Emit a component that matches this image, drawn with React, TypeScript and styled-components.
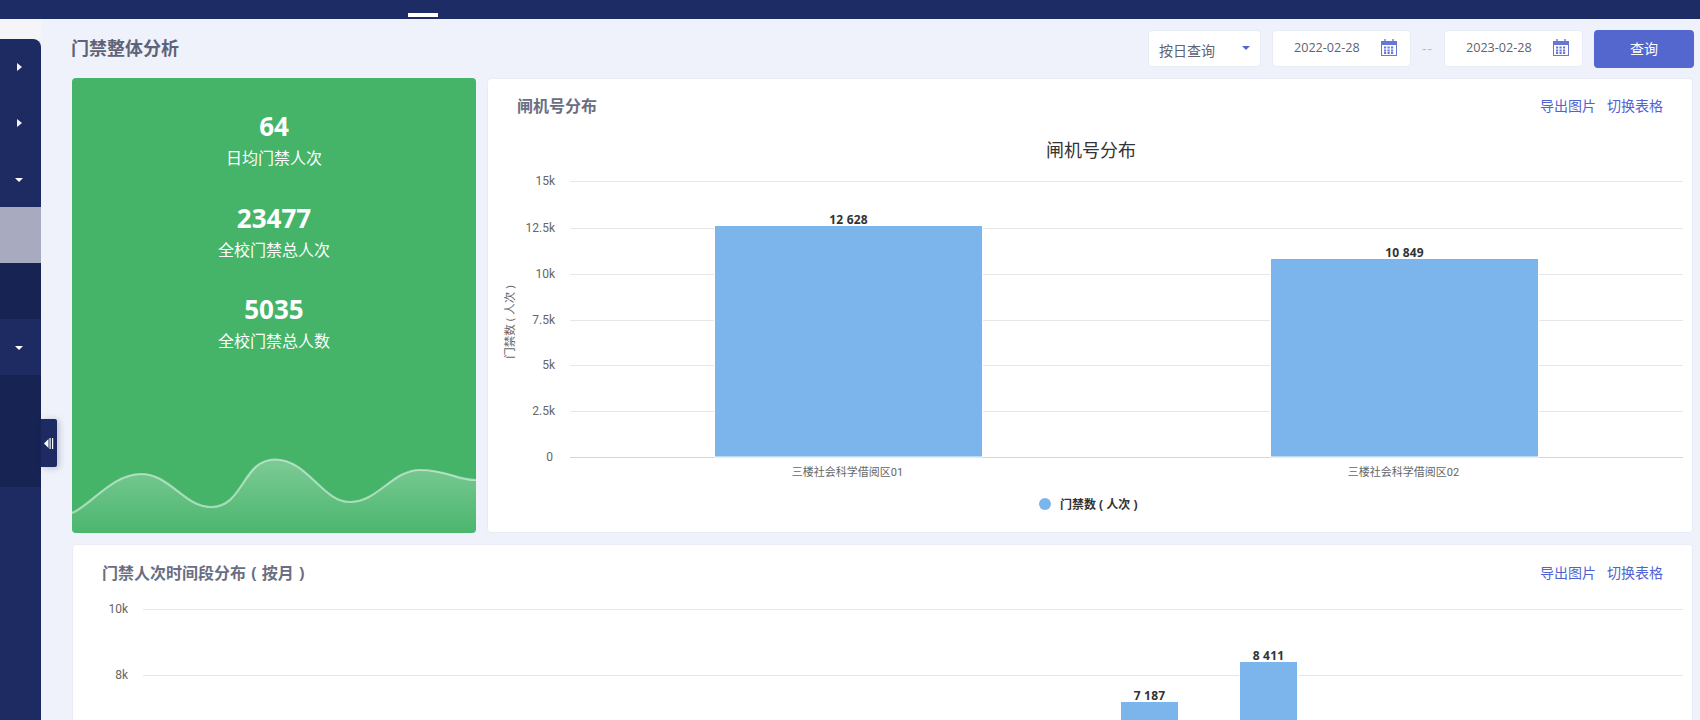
import React from "react";
import styled, { createGlobalStyle } from "styled-components";

const Global = createGlobalStyle`
  html, body { margin: 0; padding: 0; height: 720px; overflow: hidden; background: #eff2fa; }
  body { font-family: "Open Sans", "Noto Sans CJK SC", sans-serif; }
  * { box-sizing: border-box; }
`;

const Page = styled.div`
  width: 1700px;
  height: 720px;
  overflow: hidden;
  display: flex;
  flex-direction: column;
`;
const TopBar = styled.header`
  flex: 0 0 19px;
  background: #1e2c66;
  display: flex;
  align-items: flex-end;
  padding: 0 0 2px 408px;
`;
const TabMark = styled.span`
  width: 30px;
  height: 4px;
  background: #fff;
`;
const Body = styled.div`
  flex: 1;
  display: flex;
  min-height: 0;
`;
const SideColumn = styled.aside`
  position: relative;
  flex: 0 0 41px;
  padding-top: 20px;
  background: linear-gradient(#f5f5f7 20px, transparent 20px);
`;
const SideNav = styled.nav`
  height: 681px;
  background: #1e2b63;
  border-top-right-radius: 8px;
  overflow: hidden;
`;
const SideItem = styled.div<{ $tone?: "active" | "dark" }>`
  height: 56px;
  display: flex;
  align-items: center;
  padding-left: 15px;
  background: ${(p) => (p.$tone === "active" ? "#a8abc0" : p.$tone === "dark" ? "#172353" : "transparent")};
`;
const Caret = styled.span<{ $open?: boolean }>`
  width: 0;
  height: 0;
  ${(p) =>
    p.$open
      ? `margin-top: 1px; border-left: 4px solid transparent; border-right: 4px solid transparent; border-top: 4px solid #fff;`
      : `margin-left: 2px; border-top: 4px solid transparent; border-bottom: 4px solid transparent; border-left: 5px solid #f3f4f8;`}
`;
const Collapse = styled.div`
  position: absolute;
  left: 41px;
  top: 400px;
  width: 16px;
  height: 48px;
  background: #1e2b63;
  border-radius: 0 2px 2px 0;
  box-shadow: 2px 1px 6px rgba(30, 43, 99, 0.25);
  display: flex;
  align-items: center;
  justify-content: center;
`;
const Main = styled.main`
  flex: 1;
  min-width: 0;
  padding: 0 6px 0 31px;
`;
const Header = styled.div`
  height: 59px;
  display: flex;
  align-items: center;
  justify-content: space-between;
`;
const PageTitle = styled.h1`
  margin: -3px 0 0 -1px;
  font-size: 18px;
  font-weight: 700;
  color: #5f6379;
`;
const Controls = styled.div`
  display: flex;
  align-items: center;
`;
const Field = styled.div`
  height: 37px;
  background: #fff;
  border: 1px solid #e9ecf5;
  border-radius: 4px;
  display: flex;
  align-items: center;
  font-size: 12.6px;
  color: #606372;
`;
const SelectField = styled(Field)`
  width: 113px;
  margin-left: -1px;
  padding: 3px 10px 0 10px;
  margin-right: 11px;
  font-size: 14px;
  justify-content: space-between;
`;
const SelectCaret = styled.span`
  width: 0;
  height: 0;
  margin: -5px 0 0;
  border-left: 4px solid transparent;
  border-right: 4px solid transparent;
  border-top: 4px solid #5367cf;
`;
const DateField = styled(Field)`
  width: 139px;
  padding: 0 13px 2px 21px;
  justify-content: space-between;
`;
const Dash = styled.span`
  width: 33px;
  text-align: center;
  font-size: 14px;
  letter-spacing: 1px;
  color: #b9bcc8;
`;
const Query = styled.button`
  width: 100px;
  height: 38px;
  margin-left: 11px;
  padding: 0 0 2px;
  border: 0;
  border-radius: 4px;
  background: #5367cf;
  color: #fff;
  font: 14px "Open Sans", "Noto Sans CJK SC", sans-serif;
`;
const TopRow = styled.div`
  display: flex;
  gap: 11px;
  height: 455px;
  margin-right: 1px;
`;
const GreenCard = styled.section`
  position: relative;
  flex: 0 0 404px;
  padding-top: 29px;
  background: #45b469;
  border-radius: 4px;
  overflow: hidden;
  display: flex;
  flex-direction: column;
  align-items: center;
  gap: 23.5px;
  color: #fff;
`;
const Stat = styled.div`
  height: 68px;
  text-align: center;
`;
const StatValue = styled.div`
  font-size: 26px;
  font-weight: 700;
  line-height: 38px;
`;
const StatLabel = styled.div`
  margin-top: 1px;
  font-size: 16px;
  line-height: 24px;
`;
const Wave = styled.svg`
  position: absolute;
  left: 0;
  bottom: 0;
`;
const Card = styled.section`
  background: #fff;
  border: 1px solid #e9ecf5;
  border-radius: 4px;
  overflow: hidden;
`;
const ChartCard = styled(Card)`
  flex: 1;
  min-width: 0;
`;
const WideCard = styled(Card)`
  margin: 11px 1px 0 0;
  height: 420px;
`;
const CardHead = styled.div<{ $left: number; $height: number }>`
  height: ${(p) => p.$height}px;
  padding: 0 29px 3px ${(p) => p.$left}px;
  display: flex;
  align-items: center;
  justify-content: space-between;
`;
const CardTitle = styled.h2`
  margin: 0;
  font-size: 16px;
  font-weight: 700;
  word-spacing: 1px;
  color: #6a6e82;
`;
const Links = styled.div`
  display: flex;
  gap: 11px;
  font-size: 14px;
  color: #4f63d2;
`;
const ChartSvg = styled.svg`
  display: block;
  font-family: "Open Sans", "Noto Sans CJK SC", sans-serif;
`;
const Tick = styled.text`
  font-family: Roboto, "Noto Sans CJK SC", sans-serif;
  font-size: 12px;
  fill: #666;
  text-anchor: end;
`;
const DataLabel = styled.text`
  font-size: 12px;
  font-weight: 700;
  letter-spacing: 0.2px;
  fill: #333;
  text-anchor: middle;
`;
const CategoryLabel = styled.text`
  font-family: Roboto, "Noto Sans CJK SC", sans-serif;
  font-size: 11px;
  fill: #666;
  text-anchor: middle;
`;

const CalendarIcon = () => (
  <svg width="16" height="17" viewBox="0 0 16 17" fill="none">
    <rect x="0.5" y="2.5" width="15" height="14" fill="#fff" stroke="#6677d6" />
    <rect x="0" y="2" width="16" height="4" fill="#6677d6" />
    <path d="M4 0v3M12 0v3" stroke="#6677d6" strokeWidth="1.4" />
    {[7.5, 10.5, 13].map((y) =>
      [3, 6.5, 10].map((x) => <rect key={`${x}-${y}`} x={x} y={y} width="2.2" height="2" fill="#6677d6" />)
    )}
  </svg>
);

const wavePath =
  "M0 53 C 18 46, 40 14, 69 14 C 98 14, 112 47, 139 47 C 172 47, 170 -0.5, 203 -0.5 C 236 -0.5, 250 42, 278 42 C 306 42, 320 10, 348 10 C 376 10, 384 20, 404 20";

const Gradient = () => (
  <linearGradient id="waveFill" x1="0" y1="0" x2="0" y2="1">
    <stop offset="0" stopColor="#fff" stopOpacity="0.3" />
    <stop offset="1" stopColor="#fff" stopOpacity="0.03" />
  </linearGradient>
);

const ticks1 = [
  ["15k", 181],
  ["12.5k", 228],
  ["10k", 274],
  ["7.5k", 320],
  ["5k", 365],
  ["2.5k", 411],
];
const bars1 = [
  { x: 715, w: 267, top: 226, label: "12 628", cat: "三楼社会科学借阅区01" },
  { x: 1271, w: 267, top: 259, label: "10 849", cat: "三楼社会科学借阅区02" },
];
const bars2 = [
  { x: 1121, top: 702, label: "7 187" },
  { x: 1240, top: 662, label: "8 411" },
];

const GateChart = () => (
  <ChartSvg width="1204" height="398" viewBox="488 134 1204 398">
    <text x="1091" y="157" textAnchor="middle" fontSize="18" fill="#333">闸机号分布</text>
    {ticks1.map(([t, y]) => (
      <g key={t}>
        <line x1="570" x2="1683" y1={Number(y) + 0.5} y2={Number(y) + 0.5} stroke="#e6e6e6" />
        <Tick x="555" y={Number(y) + 4}>{t}</Tick>
      </g>
    ))}
    <line x1="570" x2="1683" y1="457.5" y2="457.5" stroke="#ccd6eb" />
    <Tick x="553" y="461">0</Tick>
    <text transform="translate(514 322) rotate(-90)" textAnchor="middle" fontSize="11.5" fill="#666">门禁数 ( 人次 )</text>
    {bars1.map((b) => (
      <g key={b.cat}>
        <rect x={b.x - 0.5} y={b.top - 0.5} width={b.w + 1} height={457.5 - b.top} fill="#7cb5ec" stroke="#fff" />
        <DataLabel x={b.x + b.w / 2} y={b.top - 2}>{b.label}</DataLabel>
        <CategoryLabel x={b.x + b.w / 2 - 1} y="476">{b.cat}</CategoryLabel>
      </g>
    ))}
    <circle cx="1045" cy="504" r="6" fill="#7cb5ec" />
    <text x="1060" y="509" fontSize="12" fontWeight="700" fill="#333">门禁数 ( 人次 )</text>
  </ChartSvg>
);

const MonthChart = () => (
  <ChartSvg width="1619" height="364" viewBox="73 602 1619 364">
    {[
      ["10k", 609],
      ["8k", 675],
    ].map(([t, y]) => (
      <g key={t}>
        <line x1="143" x2="1683" y1={Number(y) + 0.5} y2={Number(y) + 0.5} stroke="#e6e6e6" />
        <Tick x="128" y={Number(y) + 4}>{t}</Tick>
      </g>
    ))}
    {bars2.map((b) => (
      <g key={b.label}>
        <rect x={b.x - 0.5} y={b.top - 0.5} width="58" height={939 - b.top} fill="#7cb5ec" stroke="#fff" />
        <DataLabel x={b.x + 28.5} y={b.top - 2}>{b.label}</DataLabel>
      </g>
    ))}
  </ChartSvg>
);

const ExportLinks = () => (
  <Links>
    <span>导出图片</span>
    <span>切换表格</span>
  </Links>
);

export default function App() {
  return (
    <Page>
      <Global />
      <TopBar>
        <TabMark />
      </TopBar>
      <Body>
        <SideColumn>
          <SideNav>
            <SideItem><Caret /></SideItem>
            <SideItem><Caret /></SideItem>
            <SideItem><Caret $open /></SideItem>
            <SideItem $tone="active" />
            <SideItem $tone="dark" />
            <SideItem><Caret $open /></SideItem>
            <SideItem $tone="dark" />
            <SideItem $tone="dark" />
          </SideNav>
          <Collapse>
            <svg width="10" height="11" viewBox="0 0 10 11">
              <path d="M4.5 1v9L0 5.5z" fill="#fff" />
              <rect x="5.5" y="0" width="1.2" height="11" fill="#fff" />
              <rect x="8" y="0" width="1.2" height="11" fill="#fff" />
            </svg>
          </Collapse>
        </SideColumn>
        <Main>
          <Header>
            <PageTitle>门禁整体分析</PageTitle>
            <Controls>
              <SelectField>
                <span>按日查询</span>
                <SelectCaret />
              </SelectField>
              <DateField>
                <span>2022-02-28</span>
                <CalendarIcon />
              </DateField>
              <Dash>--</Dash>
              <DateField>
                <span>2023-02-28</span>
                <CalendarIcon />
              </DateField>
              <Query>查询</Query>
            </Controls>
          </Header>
          <TopRow>
            <GreenCard>
              <Stat>
                <StatValue>64</StatValue>
                <StatLabel>日均门禁人次</StatLabel>
              </Stat>
              <Stat>
                <StatValue>23477</StatValue>
                <StatLabel>全校门禁总人次</StatLabel>
              </Stat>
              <Stat>
                <StatValue>5035</StatValue>
                <StatLabel>全校门禁总人数</StatLabel>
              </Stat>
              <Wave width="404" height="75" viewBox="0 -2 404 75">
                <defs><Gradient /></defs>
                <path d={`${wavePath} V73 H0 Z`} fill="url(#waveFill)" />
                <path d={wavePath} fill="none" stroke="#fff" strokeOpacity="0.5" strokeWidth="2.2" />
              </Wave>
            </GreenCard>
            <ChartCard>
              <CardHead $left={29} $height={55}>
                <CardTitle>闸机号分布</CardTitle>
                <ExportLinks />
              </CardHead>
              <GateChart />
            </ChartCard>
          </TopRow>
          <WideCard>
            <CardHead $left={29} $height={57}>
              <CardTitle>门禁人次时间段分布 ( 按月 )</CardTitle>
              <ExportLinks />
            </CardHead>
            <MonthChart />
          </WideCard>
        </Main>
      </Body>
    </Page>
  );
}
